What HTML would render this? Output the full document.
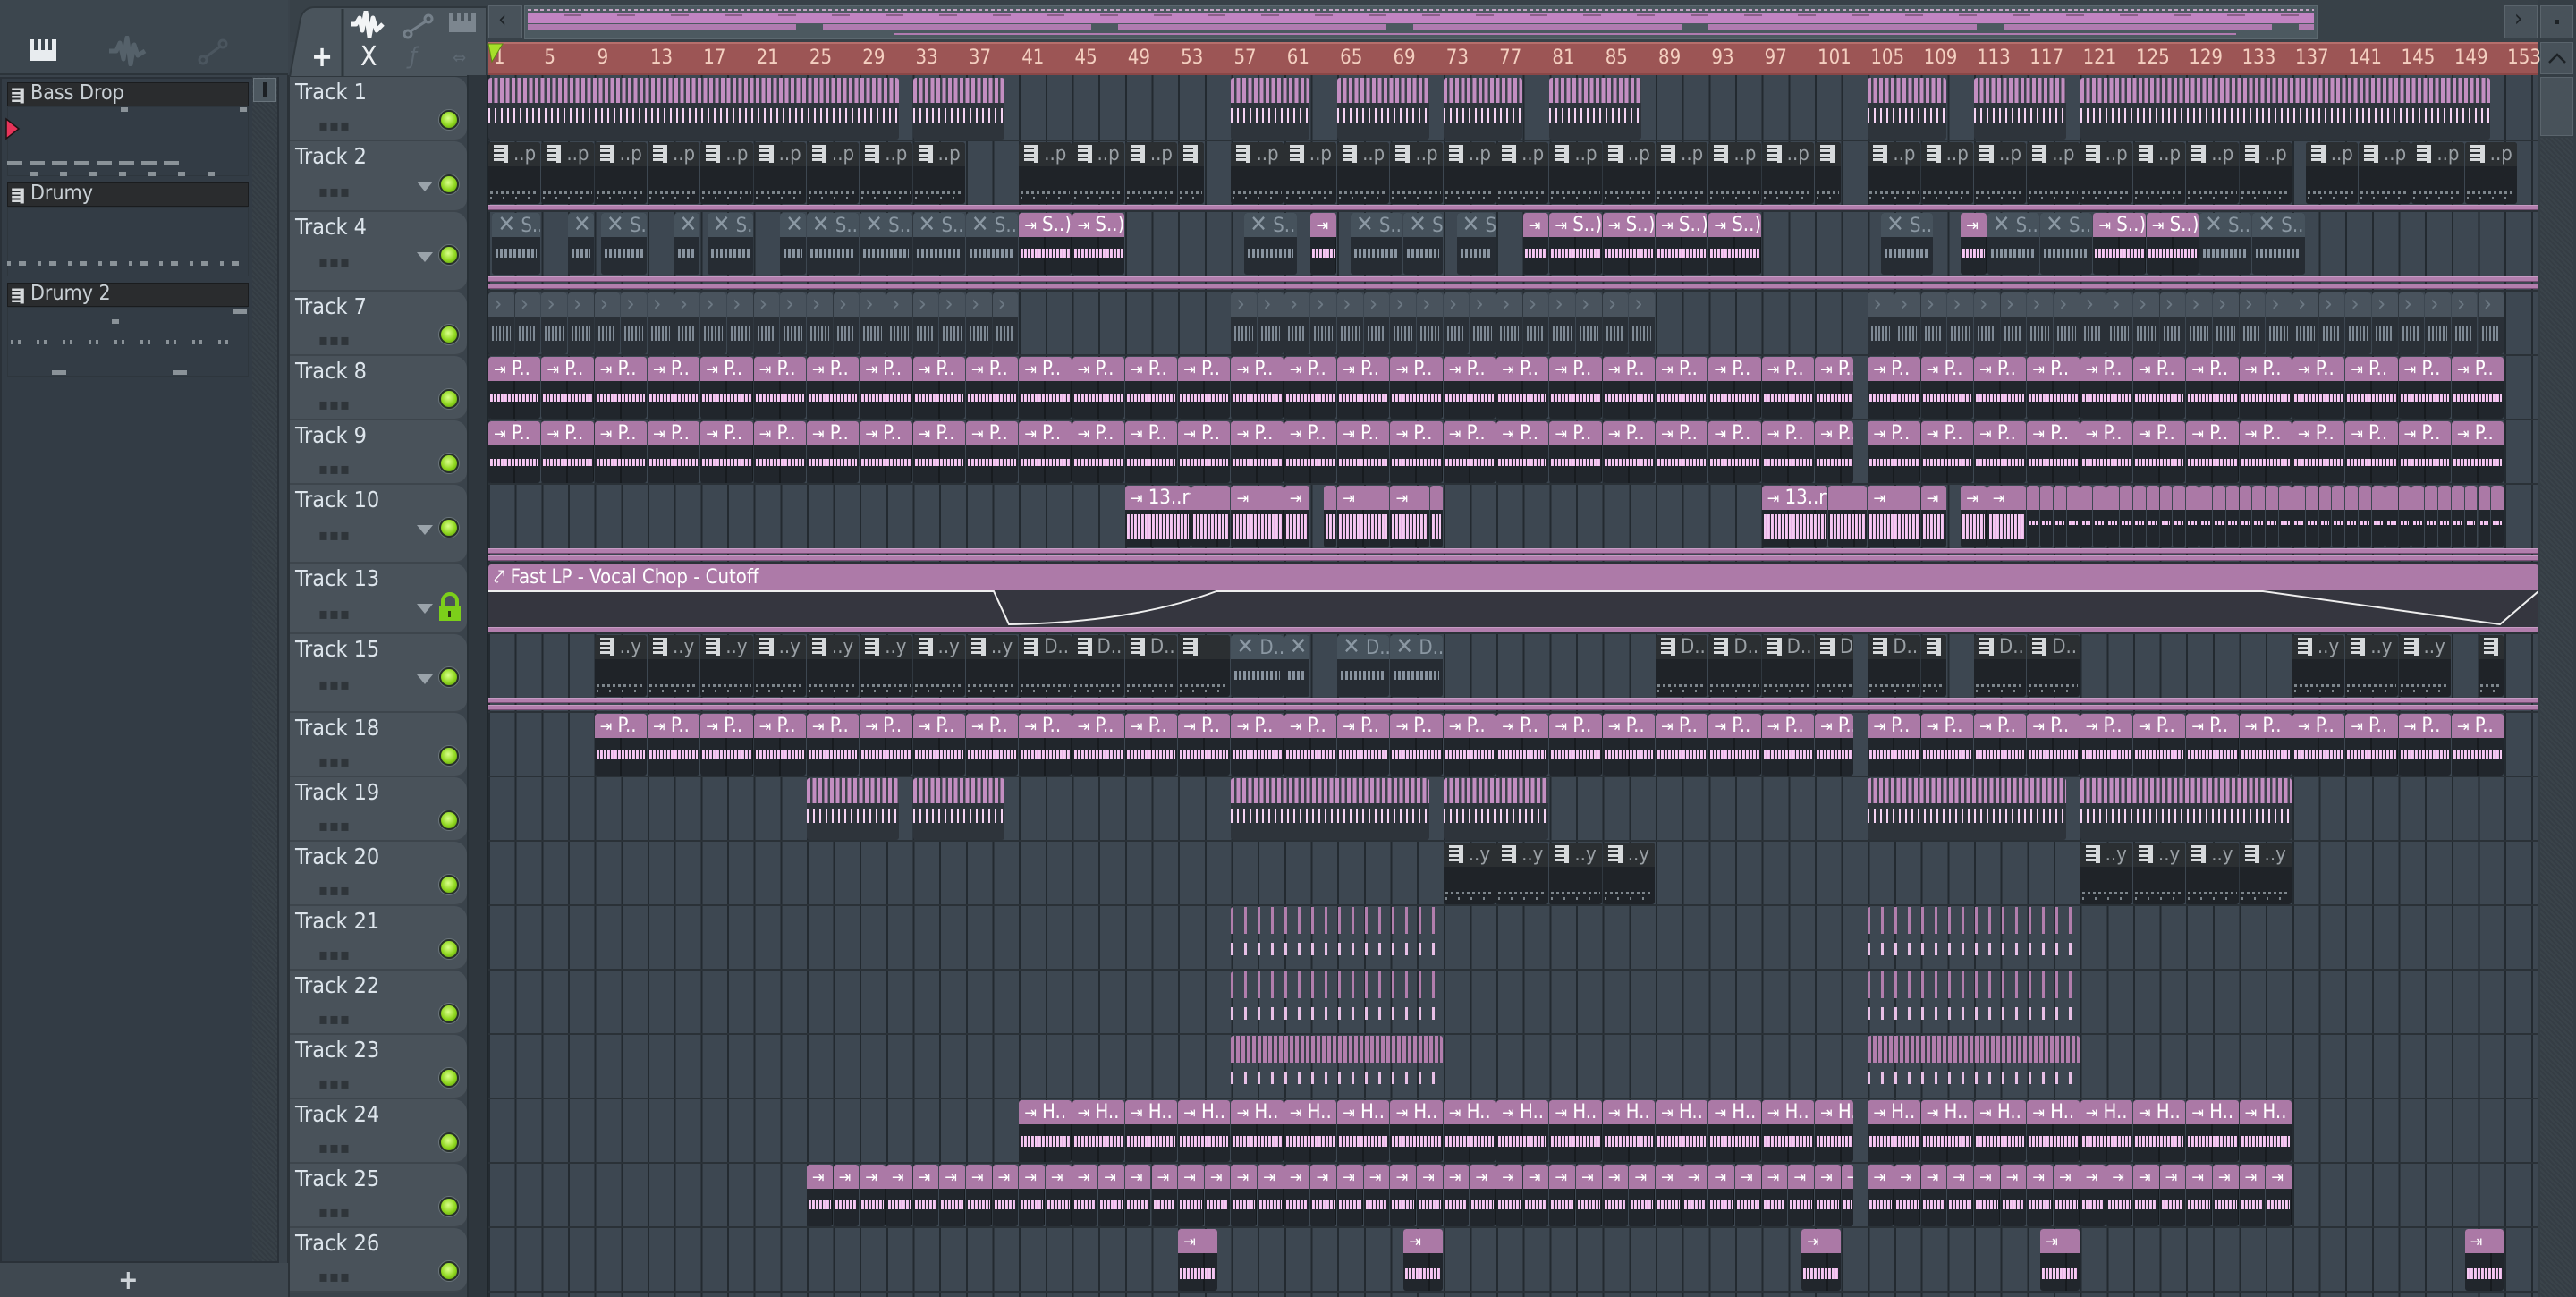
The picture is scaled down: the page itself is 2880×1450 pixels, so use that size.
<!DOCTYPE html>
<html style="width:2880px;height:1450px;overflow:hidden"><head><meta charset="utf-8">
<style>
*{margin:0;padding:0;box-sizing:border-box}
body{width:2880px;height:1450px;overflow:hidden;background:#3a434b;position:relative;font-family:"DejaVu Sans Condensed","DejaVu Sans","Liberation Sans",sans-serif;font-stretch:condensed}
.a{position:absolute}
.grid{position:absolute;left:546px;top:84px;width:2292px;height:1366px;background:#3d4751;
background-image:repeating-linear-gradient(90deg,#232a30 0 2px,transparent 2px 29.66px);overflow:hidden}
.rowsep{position:absolute;left:0;width:2292px;height:2px;background:#2a3137}
.strip{position:absolute;left:0;width:2292px;height:6px;background:#b27ead;border-top:1px solid #c79bc3;border-bottom:1px solid #7a4f77}
.c{position:absolute;overflow:hidden;border-radius:3px}
.c .h{height:27px;font-size:22px;line-height:27px;padding-left:6px;white-space:nowrap;overflow:hidden;border-radius:3px 3px 0 0}
.pk{background:#21262c;background-image:repeating-linear-gradient(90deg,transparent 0 28px,#171b1f 28px 30px)}
.pk .h{background:#ab79a6;color:#fff}
.w{position:absolute;left:2px;right:2px;background:repeating-linear-gradient(90deg,#f4c8f1 0 2px,#e9b4e6 2px 3px,transparent 3px 4px)}
.pt{background:#1f2328}
.pt .h{background:#2b2f32;color:#9aa0a5}
.ic{display:inline-block;width:16px;height:20px;vertical-align:-3px;margin-right:6px;background:repeating-linear-gradient(#d7dadc 0 3px,#2b2f32 3px 5px);border-right:5px solid #d7dadc}
.dt{position:absolute;left:2px;right:2px;height:3px;background:repeating-linear-gradient(90deg,#7d858b 0 3px,transparent 3px 6px)}
.mu{background:#262c33}
.mu .h{background:#46525c;color:#8b98a3}
.mw{position:absolute;left:4px;right:4px;height:10px;background:repeating-linear-gradient(90deg,#8994a0 0 3px,transparent 3px 5px)}
.dn{background:#2e343b}
.dn .t{position:absolute;left:0;right:0;top:0;height:28px;background:repeating-linear-gradient(90deg,#c38ec1 0 4px,#3c414a 4px 6.5px)}
.dn .b{position:absolute;left:0;right:0;top:34px;height:16px;background:repeating-linear-gradient(90deg,#f6d4f4 0 2px,transparent 2px 7px)}
.gr{background:#2a3037}
.gr .h{background:#49535d;color:#6c7883;font-size:26px}
.dr .t{position:absolute;left:0;right:0;top:0;height:30px;background:repeating-linear-gradient(90deg,#b27ead 0 3px,transparent 3px 15px)}
.dr .b{position:absolute;left:0;right:0;top:40px;height:14px;background:repeating-linear-gradient(90deg,#e8c0e6 0 3px,transparent 3px 15px)}
.th{position:absolute;left:324px;width:198px;background:#49525a;border-radius:0 14px 14px 0;border-bottom:2px solid #3d454c}
.th .n{position:absolute;left:6px;top:2px;font-size:25px;color:#dde5ec}
.th .led{position:absolute;left:167px;width:22px;height:22px;border-radius:50%;background:radial-gradient(circle at 45% 40%,#d8ff8a 0,#8fd61e 55%,#4e8a0c 100%);border:2px solid #27302a;box-shadow:0 0 0 1px #6a747b}
.th .dots{position:absolute;left:32px;font-size:18px;color:#2f353a;letter-spacing:1px}
.th .arr{position:absolute;left:142px;width:0;height:0;border-left:9px solid transparent;border-right:9px solid transparent;border-top:11px solid #9aa3aa}
.rn{position:absolute;top:52px;font-size:22px;color:#f4cfc0}
</style></head><body>

<div class="a" style="left:0;top:0;width:322px;height:84px;background:#3c464e;border-bottom:2px solid #2c343a"></div>
<div class="a" style="left:33px;top:44px;width:30px;height:24px;background:#e8ecef"></div>
<div class="a" style="left:38px;top:44px;width:4px;height:12px;background:#3c464e"></div>
<div class="a" style="left:46px;top:44px;width:4px;height:12px;background:#3c464e"></div>
<div class="a" style="left:54px;top:44px;width:4px;height:12px;background:#3c464e"></div>
<svg class="a" style="left:120px;top:40px" width="44" height="34"><path d="M2 17 L10 17 L14 8 L18 26 L22 2 L26 32 L30 10 L34 22 L42 17" fill="none" stroke="#55616a" stroke-width="5" stroke-linejoin="round"/></svg>
<svg class="a" style="left:220px;top:42px" width="36" height="32"><circle cx="7" cy="25" r="4" fill="none" stroke="#4b565f" stroke-width="3"/><circle cx="29" cy="7" r="4" fill="none" stroke="#4b565f" stroke-width="3"/><line x1="10" y1="22" x2="26" y2="10" stroke="#4b565f" stroke-width="3"/></svg>
<div class="a" style="left:0;top:86px;width:312px;height:1326px;background:#333c45;border:2px solid #2a3138"></div>
<div class="a" style="left:282px;top:86px;width:28px;height:1324px;background:repeating-linear-gradient(45deg,#384148 0 2px,#333b42 2px 4px)"></div>
<div class="a" style="left:283px;top:87px;width:26px;height:27px;background:#4d5860;border:1px solid #6a757d"></div>
<div class="a" style="left:294px;top:92px;width:4px;height:17px;background:#1c2024"></div>
<div class="a" style="left:314px;top:84px;width:9px;height:1366px;background:#3a434b"></div>
<div class="a" style="left:321px;top:84px;width:3px;height:1366px;background:#2b3238"></div>

<div class="a" style="left:8px;top:92px;width:270px;height:27px;background:#2a2c2e;border:1px solid #1a1c1e"></div>
<div class="a" style="left:12px;top:97px"><span class="ic" style="transform:scale(.85)"></span></div>
<div class="a" style="left:34px;top:91px;font-size:23px;color:#c9d0d5">Bass Drop</div>
<div class="a" style="left:8px;top:119px;width:270px;height:78px;border:1px solid #2e363d"></div>
<div class="a" style="left:8px;top:204px;width:270px;height:27px;background:#2a2c2e;border:1px solid #1a1c1e"></div>
<div class="a" style="left:12px;top:209px"><span class="ic" style="transform:scale(.85)"></span></div>
<div class="a" style="left:34px;top:203px;font-size:23px;color:#c9d0d5">Drumy</div>
<div class="a" style="left:8px;top:231px;width:270px;height:78px;border:1px solid #2e363d"></div>
<div class="a" style="left:8px;top:316px;width:270px;height:27px;background:#2a2c2e;border:1px solid #1a1c1e"></div>
<div class="a" style="left:12px;top:321px"><span class="ic" style="transform:scale(.85)"></span></div>
<div class="a" style="left:34px;top:315px;font-size:23px;color:#c9d0d5">Drumy 2</div>
<div class="a" style="left:8px;top:343px;width:270px;height:78px;border:1px solid #2e363d"></div>
<svg class="a" style="left:5px;top:131px" width="18" height="26"><path d="M2 2 L16 13 L2 24 Z" fill="#e8345a" stroke="#1d1214" stroke-width="1.5"/></svg>
<div class="a" style="left:8px;top:180px;width:195px;height:5px;background:repeating-linear-gradient(90deg,#8a9298 0 17px,transparent 17px 25px)"></div>
<div class="a" style="left:34px;top:192px;width:210px;height:5px;background:repeating-linear-gradient(90deg,#8a9298 0 8px,transparent 8px 33px)"></div>
<div class="a" style="left:135px;top:120px;width:8px;height:5px;background:#8a9298"></div>
<div class="a" style="left:268px;top:120px;width:8px;height:5px;background:#8a9298"></div>
<div class="a" style="left:8px;top:292px;width:260px;height:5px;background:repeating-linear-gradient(90deg,#8a9298 0 4px,transparent 4px 13px,#8a9298 13px 21px,transparent 21px 34px)"></div>
<div class="a" style="left:12px;top:380px;width:250px;height:5px;background:repeating-linear-gradient(90deg,#8a9298 0 3px,transparent 3px 8px,#8a9298 8px 11px,transparent 11px 29px)"></div>
<div class="a" style="left:125px;top:357px;width:8px;height:5px;background:#8a9298"></div>
<div class="a" style="left:260px;top:346px;width:16px;height:5px;background:#8a9298"></div>
<div class="a" style="left:58px;top:414px;width:16px;height:5px;background:#8a9298"></div>
<div class="a" style="left:193px;top:414px;width:16px;height:5px;background:#8a9298"></div>
<div class="a" style="left:0;top:1412px;width:322px;height:38px;background:#3f4850"></div>
<div class="a" style="left:132px;top:1414px;font-size:30px;color:#cdd3d8;font-weight:bold">+</div>

<div class="a" style="left:324px;top:0;width:2556px;height:47px;background:#384148"></div>
<svg class="a" style="left:322px;top:4px" width="224" height="82"><path d="M2 82 L14 16 Q18 4 30 4 L222 4 L222 82 Z" fill="#4a545c" stroke="#2f373d" stroke-width="2"/><line x1="61" y1="6" x2="61" y2="82" stroke="#2f373d" stroke-width="3"/></svg>
<div class="a" style="left:348px;top:44px;font-size:32px;color:#f0f3f5;font-weight:bold">+</div>
<svg class="a" style="left:390px;top:12px" width="40" height="30"><path d="M2 15 L8 15 L12 8 L15 22 L19 1 L23 29 L27 8 L31 22 L38 15" fill="none" stroke="#f2f4f6" stroke-width="5" stroke-linejoin="round"/></svg>
<svg class="a" style="left:450px;top:14px" width="36" height="30"><circle cx="6" cy="24" r="4" fill="none" stroke="#75808a" stroke-width="3"/><circle cx="29" cy="7" r="4" fill="none" stroke="#75808a" stroke-width="3"/><line x1="9" y1="21" x2="26" y2="10" stroke="#75808a" stroke-width="3"/></svg>
<div class="a" style="left:502px;top:14px;width:30px;height:22px;background:#7c868f"></div>
<div class="a" style="left:507px;top:14px;width:4px;height:10px;background:#4a545c"></div><div class="a" style="left:515px;top:14px;width:4px;height:10px;background:#4a545c"></div><div class="a" style="left:523px;top:14px;width:4px;height:10px;background:#4a545c"></div>
<div class="a" style="left:403px;top:46px;font-size:30px;color:#eef1f3">X</div>
<div class="a" style="left:458px;top:48px;font-size:26px;color:#5d6872;font-style:italic">ƒ</div>
<div class="a" style="left:506px;top:52px;font-size:20px;color:#5d6872">⇔</div>
<div class="a" style="left:546px;top:6px;width:38px;height:37px;background:#48525a;border:1px solid #5a646c"></div>
<div class="a" style="left:557px;top:7px;font-size:26px;color:#1d2226">‹</div>
<div class="a" style="left:586px;top:6px;width:2005px;height:38px;background:#4c5960;border:1px solid #5c686f"></div>
<div class="a" style="left:590px;top:10px;width:1997px;height:2px;background:repeating-linear-gradient(90deg,#c4a3c4 0 4px,transparent 4px 7px)"></div>
<div class="a" style="left:590px;top:14px;width:1997px;height:12px;background:#c184c2"></div>
<div class="a" style="left:590px;top:16px;width:1997px;height:2px;background:repeating-linear-gradient(90deg,transparent 0 40px,#8a6088 40px 60px)"></div>
<div class="a" style="left:590px;top:27px;width:1997px;height:7px;background:repeating-linear-gradient(90deg,#b07bb0 0 300px,transparent 300px 330px)"></div>
<div class="a" style="left:1000px;top:37px;width:1500px;height:2px;background:#b07bb0"></div>
<div class="a" style="left:2800px;top:6px;width:37px;height:37px;background:#48525a;border:1px solid #5a646c"></div>
<div class="a" style="left:2811px;top:6px;font-size:26px;color:#1d2226">›</div>
<div class="a" style="left:2838px;top:0;width:42px;height:1450px;background:#353e45"></div>
<div class="a" style="left:2840px;top:6px;width:37px;height:37px;background:#48525a;border:1px solid #5a646c"></div>
<div class="a" style="left:2856px;top:22px;width:5px;height:5px;background:#1d2226"></div>
<div class="a" style="left:2840px;top:47px;width:37px;height:36px;background:#48525a;border:1px solid #5a646c"></div>
<svg class="a" style="left:2848px;top:58px" width="22" height="14"><path d="M2 12 L11 3 L20 12" fill="none" stroke="#1d2226" stroke-width="2.5"/></svg>
<div class="a" style="left:2840px;top:86px;width:37px;height:66px;background:#48525a;border:1px solid #5a646c"></div>
<div class="a" style="left:2840px;top:154px;width:37px;height:1296px;background:repeating-linear-gradient(45deg,#3a434a 0 2px,#353d44 2px 4px)"></div>

<div class="a" style="left:546px;top:47px;width:2292px;height:37px;background:#9c5555;border-top:2px solid #b66f6c;border-bottom:2px solid #8a4747"></div>
<div id="ruler"></div>
<svg class="a" style="left:544px;top:47px" width="20" height="26"><path d="M2 2 L18 2 L6 22 Z" fill="#a6e02a" stroke="#5c8a12" stroke-width="1"/></svg>

<div class="a" style="left:522px;top:84px;width:24px;height:1366px;background:#2e363d;border-left:2px solid #283036;border-right:2px solid #1f262b"></div>

<div class="grid" id="grid"></div>
<div id="heads" class="a" style="left:0;top:0;width:2880px;height:1450px;overflow:hidden"></div>

<script>
var G=document.getElementById('grid'),H=document.getElementById('heads'),R=document.getElementById('ruler');
function X(b){return (b-1)*14.83;}
var rs='';for(var n=1;n<=153;n+=4){rs+='<div class="rn" style="left:'+(546+X(n)+(n==1?6:3))+'px">'+n+'</div>';}
R.innerHTML=rs;
var rows=[["Track 1",86,72,0,0,0],["Track 2",158,79,1,1,0],["Track 4",237,89,2,1,0],["Track 7",326,72,0,0,0],["Track 8",398,72,0,0,0],["Track 9",470,72,0,0,0],["Track 10",542,88,2,1,0],["Track 13",630,79,1,1,1],["Track 15",709,88,2,1,0],["Track 18",797,72,0,0,0],["Track 19",869,72,0,0,0],["Track 20",941,72,0,0,0],["Track 21",1013,72,0,0,0],["Track 22",1085,72,0,0,0],["Track 23",1157,72,0,0,0],["Track 24",1229,72,0,0,0],["Track 25",1301,72,0,0,0],["Track 26",1373,72,0,0,0]];
var hs='',gs='',T={};
rows.forEach(function(r,i){
 var top=r[1],h=r[2];T[r[0]]=top-84;
 hs+='<div class="th" style="top:'+top+'px;height:'+h+'px"><div class="n">'+r[0]+'</div><div class="dots" style="top:'+(h>72?46:44)+'px">▪▪▪</div>';
 if(r[5]) hs+='<svg class="a" style="left:164px;top:32px" width="30" height="34"><path d="M7 16 L7 10 A8 8 0 0 1 23 10 L23 16" fill="none" stroke="#7ccf1a" stroke-width="4"/><rect x="3" y="16" width="24" height="16" fill="#7ccf1a"/><rect x="13" y="21" width="3" height="7" fill="#2a3a10"/></svg>';
 else hs+='<div class="led" style="top:37px"></div>';
 if(r[4]) hs+='<div class="arr" style="top:45px"></div>';
 hs+='</div>';
 var gt=top-84;
 gs+='<div class="rowsep" style="top:'+(gt+h-2)+'px"></div>';
 if(r[3]==1) gs+='<div class="strip" style="top:'+(gt+h-8)+'px"></div>';
 if(r[3]==2) gs+='<div class="strip" style="top:'+(gt+h-17)+'px"></div><div class="strip" style="top:'+(gt+h-9)+'px"></div>';
});
H.innerHTML=hs;
function clip(tr,b1,b2,type,label,opt){
 var x=X(b1),w=X(b2)-X(b1)-1,t=T[tr]+1,s='';
 opt=opt||{};
 if(type=='pk'){var wy=opt.wy||42,wh=opt.wh||8;s='<div class="h">'+(label===null?'':'<span style="font-size:18px">⇥</span> '+label)+'</div><div class="w" style="top:'+wy+'px;height:'+wh+'px"></div>';}
 else if(type=='pt'){s='<div class="h"><span class="ic"></span>'+label+'</div><div class="dt" style="top:55px"></div><div class="dt" style="top:61px;background:repeating-linear-gradient(90deg,#7d858b 0 2px,transparent 2px 14px)"></div>';}
 else if(type=='mu'){s='<div class="h"><span style="font-size:26px">✕</span> '+label+'</div><div class="mw" style="top:40px"></div>';}
 else if(type=='dn'){s='<div class="t"></div><div class="b"></div>';}
 else if(type=='gr'){s='<div class="h">›</div><div class="mw" style="top:38px;height:16px;background:repeating-linear-gradient(90deg,#7e8994 0 2px,transparent 2px 4px)"></div>';}
 else if(type=='dr'){s='<div class="t" style="'+(opt.s||'')+'"></div><div class="b"></div>';}
 gs+='<div class="c '+type+'" style="left:'+x+'px;top:'+t+'px;width:'+w+'px;height:69px">'+s+'</div>';
}
function seg(tr,b1,b2,type,step,label,opt){for(var b=b1;b<b2;b+=step){clip(tr,b,Math.min(b+step,b2),type,label,opt);}}
[[1,32],[33,40],[57,63],[65,72],[73,79],[81,88],[105,111],[113,120],[121,152]].forEach(function(s){clip("Track 1",s[0],s[1],'dn');});
[[1,37],[41,55],[57,89],[89,103],[105,137],[138,154]].forEach(function(s){seg("Track 2",s[0],s[1],'pt',4,'..p');});
var t4=[['mu',1.3,5],['mu',7,9],['mu',9.5,13],['mu',15,17],['mu',17.5,21],['mu',23,25],['mu',25,29],['mu',29,33],['mu',33,37],['mu',37,41],['pk',41,45],['pk',45,49],['mu',58,62],['pk',63,65],['mu',66,70],['mu',70,73],['mu',74,77],['pk',79,81],['pk',81,85],['pk',85,89],['pk',89,93],['pk',93,97],['mu',106,110],['pk',112,114],['mu',114,118],['mu',118,122],['pk',122,126],['pk',126,130],['mu',130,134],['mu',134,138]];
t4.forEach(function(c){var w=c[2]-c[1];clip("Track 4",c[1],c[2],c[0],w>=4?'S..)':(w>=3?'S..':''),{wy:40,wh:10});});
[[1,41],[57,89],[105,153]].forEach(function(s){seg("Track 7",s[0],s[1],'gr',2,'');});
["Track 8","Track 9"].forEach(function(tr){[[1,57],[57,73],[73,104],[105,121],[121,153]].forEach(function(s){seg(tr,s[0],s[1],'pk',4,'P..');});});
[[9,57],[57,73],[73,104],[105,121],[121,153]].forEach(function(s){seg("Track 18",s[0],s[1],'pk',4,'P..',{wy:40,wh:10});});
clip("Track 10",49,54,'pk','13..ry',{wy:32,wh:28});clip("Track 10",54,57,'pk',null,{wy:32,wh:28});clip("Track 10",57,61,'pk','',{wy:32,wh:28});clip("Track 10",61,63,'pk','',{wy:32,wh:28});
clip("Track 10",64,65,'pk',null,{wy:32,wh:28});clip("Track 10",65,69,'pk','',{wy:32,wh:28});clip("Track 10",69,72,'pk','',{wy:32,wh:28});clip("Track 10",72,73,'pk',null,{wy:32,wh:28});
clip("Track 10",97,102,'pk','13..ry',{wy:32,wh:28});clip("Track 10",102,105,'pk',null,{wy:32,wh:28});clip("Track 10",105,109,'pk','',{wy:32,wh:28});clip("Track 10",109,111,'pk','',{wy:32,wh:28});
clip("Track 10",112,114,'pk','',{wy:32,wh:28});clip("Track 10",114,117,'pk','',{wy:32,wh:28});
seg("Track 10",117,153,'pk',1,null,{wy:40,wh:4});
gs+='<div class="c" style="left:0;top:'+(T["Track 13"]+1)+'px;width:2292px;height:70px;background:#35363f"><div class="h" style="background:#ad7aa8;color:#fff;height:29px;line-height:29px">⤤ Fast LP - Vocal Chop - Cutoff</div>'+
'<svg class="a" style="left:0;top:29px" width="2292" height="41"><path d="M0 1 L565 1 L582 38 Q720 36 814 1 L1984 1 L2249 38 L2292 1" fill="none" stroke="#eee" stroke-width="2"/></svg></div>';
seg("Track 15",9,41,'pt',4,'..y');seg("Track 15",41,53,'pt',4,'D..');clip("Track 15",53,57,'pt','');
clip("Track 15",57,61,'mu','D..');clip("Track 15",61,63,'mu','');clip("Track 15",65,69,'mu','D..');clip("Track 15",69,73,'mu','D..');
seg("Track 15",89,104,'pt',4,'D..');clip("Track 15",105,109,'pt','D..');clip("Track 15",109,111,'pt','');
clip("Track 15",113,117,'pt','D..');clip("Track 15",117,121,'pt','D..');seg("Track 15",137,149,'pt',4,'..y');clip("Track 15",151,153,'pt','');
[[25,32],[33,40],[57,72],[73,81],[105,120],[121,137]].forEach(function(s){clip("Track 19",s[0],s[1],'dn');});
[[73,89],[121,137]].forEach(function(s){seg("Track 20",s[0],s[1],'pt',4,'..y');});
["Track 21","Track 22","Track 23"].forEach(function(tr,i){[[57,73],[105,121]].forEach(function(s){clip(tr,s[0],s[1],'dr','',{s:i==2?'background:repeating-linear-gradient(90deg,#b27ead 0 4px,#3a3f48 4px 6px)':''});});});
[[41,57],[57,73],[73,104],[105,121],[121,137]].forEach(function(s){seg("Track 24",s[0],s[1],'pk',4,'H..',{wy:40,wh:12});});
[[25,57],[57,73],[73,104],[105,121],[121,137]].forEach(function(s){seg("Track 25",s[0],s[1],'pk',2,'',{wy:40,wh:10});});
[[53,56],[70,73],[100,103],[118,121],[150,153]].forEach(function(s){clip("Track 26",s[0],s[1],'pk','',{wy:44,wh:12});});
G.innerHTML=gs;
</script>
</body></html>
